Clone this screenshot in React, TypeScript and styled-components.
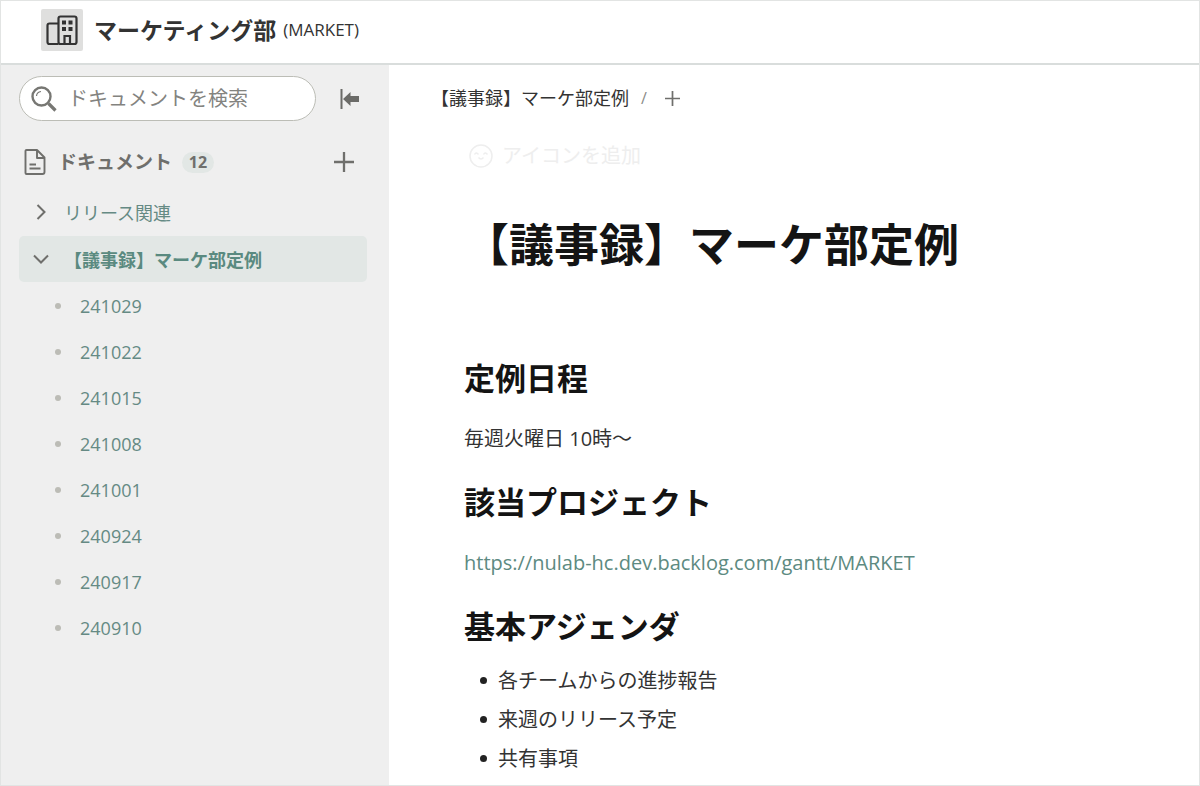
import React from "react";
import styled, { createGlobalStyle } from "styled-components";

const GlobalStyle = createGlobalStyle`
  *, *::before, *::after { box-sizing: border-box; }
  body {
    margin: 0;
    background: #fff;
    color: #333;
    font-family: "Open Sans", "Noto Sans CJK JP", sans-serif;
    font-size: 18px;
  }
  button { font: inherit; color: inherit; background: none; border: 0; padding: 0; cursor: pointer; }
  a { color: inherit; text-decoration: none; }
  svg { display: block; flex: none; }
`;

const Page = styled.div`
  display: flex;
  flex-direction: column;
  min-height: 100vh;
  border: 1px solid #e2e4e3;
`;

const Header = styled.header`
  display: flex;
  align-items: center;
  height: 64px;
  padding: 0 40px 5px;
  border-bottom: 2px solid #d9dddc;
`;

const ProjectIcon = styled.span`
  display: grid;
  place-items: center;
  width: 42px;
  height: 42px;
  margin-right: 11px;
  border-radius: 2px;
  background: #dfdfde;
`;

const ProjectName = styled.strong`
  font-size: 23px;
  line-height: 32px;
  color: #333;
`;

const ProjectKey = styled.span`
  margin-left: 7px;
  font-size: 17px;
  font-weight: 500;
  line-height: 32px;
`;

const Columns = styled.div`
  display: flex;
  flex: 1;
`;

const Sidebar = styled.aside`
  flex: 0 0 388px;
  padding: 11px 22px 24px 18px;
  background: #efefef;
  color: #6f6f6c;
`;

const SearchRow = styled.div`
  display: flex;
  align-items: center;
  gap: 24px;
`;

const SearchBox = styled.label`
  display: flex;
  align-items: center;
  gap: 11px;
  width: 297px;
  height: 45px;
  padding: 0 11px;
  border: 1px solid #bcbdb6;
  border-radius: 23px;
  background: #fff;
`;

const SearchInput = styled.input`
  flex: 1;
  min-width: 0;
  padding: 0;
  border: 0;
  outline: 0;
  background: none;
  font: inherit;
  font-size: 20px;
  color: #333;
  &::placeholder { color: #83837f; opacity: 1; }
`;

const SectionHead = styled.div`
  display: flex;
  align-items: center;
  height: 46px;
  margin: 18px 13px 4px 4px;
`;

const SectionTitle = styled.h2`
  margin: 0 0 0 11px;
  font-size: 19px;
  line-height: 28px;
  font-weight: 700;
`;

const Count = styled.span`
  min-width: 32px;
  margin: 1px auto 0 10px;
  border-radius: 11px;
  background: #e2e7e5;
  font-size: 16px;
  font-weight: 700;
  line-height: 21px;
  text-align: center;
`;

const Tree = styled.ul`
  display: grid;
  gap: 1px;
  margin: 0;
  padding: 0;
  list-style: none;
`;

const SubTree = styled(Tree)`
  gap: 0;
  padding-top: 1px;
`;

const TreeLink = styled.a<{ $active?: boolean; $child?: boolean }>`
  display: flex;
  align-items: center;
  gap: ${(p) => (p.$child ? "19px" : "14px")};
  height: 46px;
  padding-left: ${(p) => (p.$child ? "36px" : "13px")};
  border-radius: 5px;
  background: ${(p) => (p.$active ? "#e2e7e5" : "transparent")};
  color: ${(p) => (p.$active ? "#5a8a80" : "#658a84")};
  font-weight: ${(p) => (p.$active ? 700 : 400)};
  svg { color: #6f6f6c; }
`;

const Dot = styled.span`
  width: 6px;
  height: 6px;
  border-radius: 50%;
  background: #bcbcb6;
`;

const Main = styled.main`
  flex: 1;
  min-width: 0;
  padding: 19px 40px 0;
`;

const Breadcrumb = styled.nav`
  display: flex;
  align-items: center;
  padding-left: 2px;
  line-height: 28px;
`;

const Slash = styled.span`
  margin: 0 18px 0 12px;
  font-size: 16px;
  color: #8b8b88;
`;

const Article = styled.article`
  padding: 0 35px;
  font-size: 20px;
  line-height: 32px;
`;

const AddIcon = styled.button`
  display: flex;
  align-items: center;
  gap: 9px;
  height: 28px;
  margin: 30px 0 0 5px;
  color: #eeeeee;
`;

const Title = styled.h1`
  margin: 45px 0 81px;
  font-size: 45px;
  line-height: 60px;
  color: #141414;
`;

const Heading = styled.h2`
  margin: 25px 0 23px;
  font-size: 31px;
  line-height: 44px;
  color: #141414;
`;

const Text = styled.p`
  margin: 0;
`;

const BodyLink = styled.a`
  color: #5d8a81;
`;

const Agenda = styled.ul`
  margin: -10px 0 0;
  padding-left: 16px;
  line-height: 39px;
  list-style: none;
`;

const AgendaItem = styled.li`
  display: flex;
  align-items: center;
  gap: 11px;
  &::before {
    content: "";
    width: 7px;
    height: 7px;
    border-radius: 50%;
    background: #222;
  }
`;

const Plus = ({ size }: { size: number }) => (
  <svg width={size} height={size} viewBox="0 0 20 20" fill="none" stroke="#6f6f6c" strokeWidth="2.300" aria-hidden="true">
    <path d="M10 0v20M0 10h20" />
  </svg>
);

const Building = () => (
  <svg width="34" height="34" viewBox="0 0 34 34" fill="none" stroke="#333" strokeWidth="2.200" aria-hidden="true">
    <path d="M13.500 10.500H4.500a2 2 0 0 0-2 2v16.500a2 2 0 0 0 2 2h9" />
    <rect x="13.500" y="3.500" width="18" height="27.500" rx="2" />
    <path d="M19.500 31v-8h5.500v8" />
    <path d="M17 7.500h4v4h-4zM23.500 7.500h4v4h-4zM17 14h4v4h-4zM23.500 14h4v4h-4z" fill="#333" stroke="none" />
  </svg>
);

const Magnifier = () => (
  <svg width="26" height="26" viewBox="0 0 26 26" fill="none" stroke="#777773" aria-hidden="true">
    <circle cx="10.500" cy="10.500" r="9" strokeWidth="2.400" />
    <path d="M17.500 17.500l7 7" strokeWidth="3.200" />
    <path d="M5.500 10a5 5 0 0 1 4.500-4.500" strokeWidth="1.200" />
  </svg>
);

const Collapse = () => (
  <svg width="20" height="20" viewBox="0 0 20 20" aria-hidden="true">
    <path d="M0.500 0h2v20h-2zM3 10l7.500-7v4h8.500v6h-8.500v4z" fill="#6b6b68" />
  </svg>
);

const DocumentIcon = () => (
  <svg width="24" height="26" viewBox="0 0 24 26" fill="none" stroke="#6f6f6c" strokeWidth="1.900" strokeLinejoin="round" aria-hidden="true">
    <path d="M3.500 1h10.500l7.500 7.500v14.500a2 2 0 0 1-2 2H3.500a1 1 0 0 1-1-1v-22a1 1 0 0 1 1-1z" />
    <path d="M14 1v8h7.500M6.500 15.500h6.500M6.500 19.500h11" />
  </svg>
);

const Chevron = ({ open }: { open?: boolean }) => (
  <svg width="18" height="18" viewBox="0 0 18 18" fill="none" stroke="currentColor" strokeWidth="2" aria-hidden="true">
    <path d={open ? "M2 5.500l7 7 7-7" : "M5.500 2l7 7-7 7"} />
  </svg>
);

const Smile = () => (
  <svg width="24" height="24" viewBox="0 0 24 24" fill="none" stroke="currentColor" strokeWidth="1.500" aria-hidden="true">
    <circle cx="12" cy="12" r="11" />
    <path d="M5.500 10.500q1.700-3 4 0M14.500 10.500q1.700-3 4 0M9.500 13.500q2.500 3 5 0" />
  </svg>
);

const meetings = ["241029", "241022", "241015", "241008", "241001", "240924", "240917", "240910"];
const agenda = ["各チームからの進捗報告", "来週のリリース予定", "共有事項"];

export default function App() {
  return (
    <Page lang="ja">
      <GlobalStyle />
      <Header>
        <ProjectIcon><Building /></ProjectIcon>
        <ProjectName>マーケティング部</ProjectName>
        <ProjectKey>(MARKET)</ProjectKey>
      </Header>
      <Columns>
        <Sidebar>
          <SearchRow>
            <SearchBox>
              <Magnifier />
              <SearchInput type="search" placeholder="ドキュメントを検索" aria-label="ドキュメントを検索" />
            </SearchBox>
            <button type="button" aria-label="サイドバーを閉じる"><Collapse /></button>
          </SearchRow>
          <SectionHead>
            <DocumentIcon />
            <SectionTitle>ドキュメント</SectionTitle>
            <Count>12</Count>
            <button type="button" aria-label="ドキュメントを追加"><Plus size={20} /></button>
          </SectionHead>
          <Tree>
            <li><TreeLink href="#release"><Chevron />リリース関連</TreeLink></li>
            <li>
              <TreeLink href="#minutes" $active><Chevron open />【議事録】マーケ部定例</TreeLink>
              <SubTree>
                {meetings.map((m) => (
                  <li key={m}><TreeLink href={"#" + m} $child><Dot />{m}</TreeLink></li>
                ))}
              </SubTree>
            </li>
          </Tree>
        </Sidebar>
        <Main>
          <Breadcrumb>
            <a href="#minutes">【議事録】マーケ部定例</a>
            <Slash>/</Slash>
            <button type="button" aria-label="子ページを追加"><Plus size={15} /></button>
          </Breadcrumb>
          <Article>
            <AddIcon type="button"><Smile />アイコンを追加</AddIcon>
            <Title>【議事録】マーケ部定例</Title>
            <Heading>定例日程</Heading>
            <Text>毎週火曜日 10時～</Text>
            <Heading>該当プロジェクト</Heading>
            <Text><BodyLink href="https://nulab-hc.dev.backlog.com/gantt/MARKET">https://nulab-hc.dev.backlog.com/gantt/MARKET</BodyLink></Text>
            <Heading>基本アジェンダ</Heading>
            <Agenda>
              {agenda.map((a) => <AgendaItem key={a}>{a}</AgendaItem>)}
            </Agenda>
          </Article>
        </Main>
      </Columns>
    </Page>
  );
}
